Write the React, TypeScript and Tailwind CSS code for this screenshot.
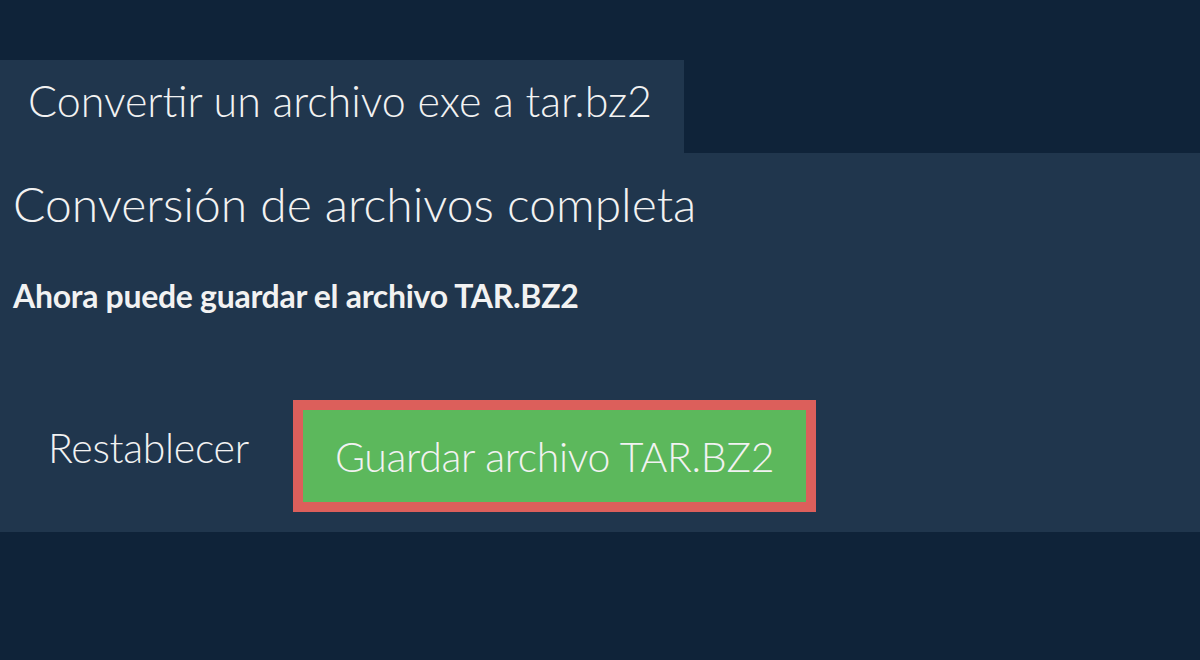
export default function App() {
  return (
    <div
      className="h-[660px] w-[1200px] bg-[#0f2339] pt-[60px] text-[#f2f2f2]"
      style={{ fontFamily: "Lato, 'Noto Sans', sans-serif" }}
    >
      <div className="h-[93px] w-[684px] bg-[#20364d] pl-[28px] pt-[19px]">
        <div className="text-[43px] font-light leading-none">Convertir un archivo exe a tar.bz2</div>
      </div>
      <div className="flex h-[379px] flex-col bg-[#20364d] px-[13px]">
        <h1 className="mt-[27px] text-[48px] font-light leading-none">Conversión de archivos completa</h1>
        <p className="mt-[52px] text-[32px] font-bold leading-none tracking-[-0.3px]">
          Ahora puede guardar el archivo TAR.BZ2
        </p>
        <div className="mt-[88px] flex items-start">
          <button className="mt-[27px] w-[280px] pl-[35px] text-left text-[41px] font-light leading-none tracking-[-0.3px]">
            Restablecer
          </button>
          <button className="flex h-[112px] w-[523px] items-center justify-center border-[10px] border-[#dc5f5b] bg-[#5cb85c] text-[41px] font-light leading-none tracking-[-0.3px]">
            Guardar archivo TAR.BZ2
          </button>
        </div>
      </div>
    </div>
  );
}
